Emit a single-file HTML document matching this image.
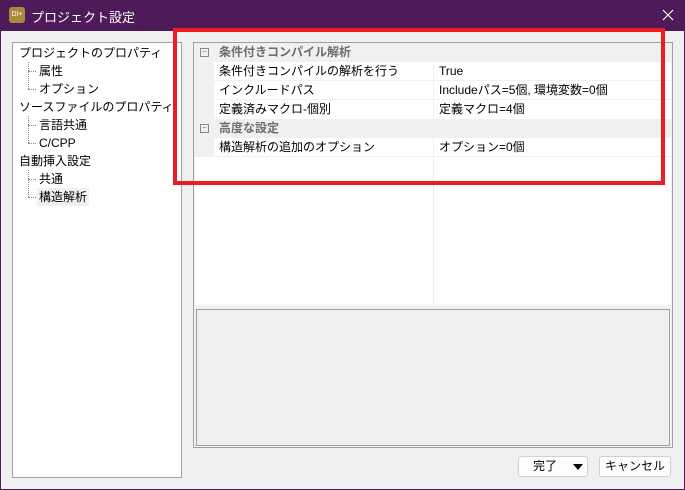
<!DOCTYPE html>
<html><head><meta charset="utf-8"><style>
*{margin:0;padding:0;box-sizing:border-box}
body{width:685px;height:490px;overflow:hidden;background:#f0f0f0;font-family:"Liberation Sans","Noto Sans CJK JP",sans-serif;font-size:12px;color:#000;position:relative}
.abs{position:absolute}
#win{left:0;top:0;width:685px;height:490px;border:1px solid #4f1a5a;border-top:none}
#title{left:0;top:0;width:685px;height:31px;background:#4f1a5a;color:#fff}
#tree{left:12px;top:42px;width:170px;height:436px;background:#fff;border:1px solid #a0a0a0}
.t{position:absolute;left:6px;white-space:nowrap;line-height:18px}
.d{position:absolute;border-left:1px dotted #888;left:15px;width:1px}
.h{position:absolute;border-top:1px dotted #888;left:15px;width:8px;height:1px}
#grid{left:193px;top:42px;width:480px;height:406px;border:1px solid #a0a0a0;background:#f0f0f0}
.row{position:absolute;left:1px;width:476px;height:19px;line-height:19px}
.cat{background:#f0f0f0;color:#6d6d6d;font-weight:bold}
.prop{background:#fff}
.k{position:absolute;left:24px}
.v{position:absolute;left:244px}
.btn{position:absolute;height:21px;border:1px solid #d0d0d0;border-radius:3px;background:#fdfdfd;line-height:19px;text-align:center}
.g{position:absolute;left:0;width:19px;height:19px;background:#f0f0f0}
</style></head><body>
<div id="win" class="abs"></div>
<div id="title" class="abs">
 <div class="abs" style="left:9px;top:7px;width:16px;height:16px;background:#a88a3a;border-radius:3px;color:#fff;font-size:7px;line-height:16px;text-align:center">DI+</div>
 <div class="abs" style="left:31px;top:7px;font-size:13px">プロジェクト設定</div>
 <svg class="abs" style="left:662px;top:9px" width="12" height="12"><path d="M1 1L11 11M11 1L1 11" stroke="#fff" stroke-width="1.2"/></svg>
</div>
<div id="tree" class="abs">
 <div class="t" style="top:1px">プロジェクトのプロパティ</div>
 <div class="d" style="top:19px;height:27px"></div>
 <div class="h" style="top:28px"></div><div class="h" style="top:46px"></div>
 <div class="t" style="left:26px;top:19px">属性</div>
 <div class="t" style="left:26px;top:37px">オプション</div>
 <div class="t" style="top:55px">ソースファイルのプロパティ</div>
 <div class="d" style="top:73px;height:27px"></div>
 <div class="h" style="top:82px"></div><div class="h" style="top:100px"></div>
 <div class="t" style="left:26px;top:73px">言語共通</div>
 <div class="t" style="left:26px;top:91px">C/CPP</div>
 <div class="t" style="top:109px">自動挿入設定</div>
 <div class="d" style="top:127px;height:27px"></div>
 <div class="h" style="top:136px"></div><div class="h" style="top:154px"></div>
 <div class="t" style="left:26px;top:127px">共通</div>
 <div class="t" style="left:24px;top:145px;background:#f0f0f0;padding:0 2px">構造解析</div>
</div>
<div id="grid" class="abs">
 <div class="abs" style="left:1px;top:1px;width:476px;height:261px;background:#fff"></div>
 <div class="abs" style="left:239px;top:115px;width:1px;height:147px;background:#eee"></div>
 <div class="row cat" style="top:0"><span class="abs" style="left:5px;top:5px;width:9px;height:9px;border:1px solid #888;font-size:8px;line-height:6px;text-align:center;font-weight:normal">−</span><span class="k">条件付きコンパイル解析</span></div>
 <div class="row prop" style="top:19px;border-bottom:1px solid #f0f0f0"><div class="g"></div><span class="k">条件付きコンパイルの解析を行う</span><span class="v">True</span></div>
 <div class="row prop" style="top:38px;border-bottom:1px solid #f0f0f0"><div class="g"></div><span class="k">インクルードパス</span><span class="v">Includeパス=5個, 環境変数=0個</span></div>
 <div class="row prop" style="top:57px"><div class="g"></div><span class="k">定義済みマクロ-個別</span><span class="v">定義マクロ=4個</span></div>
 <div class="row cat" style="top:76px"><span class="abs" style="left:5px;top:5px;width:9px;height:9px;border:1px solid #888;font-size:8px;line-height:6px;text-align:center;font-weight:normal">−</span><span class="k">高度な設定</span></div>
 <div class="row prop" style="top:95px;border-bottom:1px solid #f0f0f0"><div class="g"></div><span class="k">構造解析の追加のオプション</span><span class="v">オプション=0個</span></div>
 <div class="abs" style="left:239px;top:19px;width:1px;height:57px;background:#f0f0f0"></div>
 <div class="abs" style="left:239px;top:95px;width:1px;height:20px;background:#f0f0f0"></div>
 <div class="abs" style="left:2px;top:266px;width:474px;height:137px;border:1px solid #a0a0a0;background:#efefef"></div>
</div>
<div class="abs" style="left:173px;top:28px;width:492px;height:157px;border:4px solid #ec1c24"></div>
<div class="btn" style="left:518px;top:456px;width:70px;text-align:left;padding-left:14px">完了<svg class="abs" style="left:54px;top:7px" width="10" height="6"><path d="M0 0H10L5 6Z" fill="#000"/></svg></div>
<div class="btn" style="left:599px;top:456px;width:72px">キャンセル</div>
</body></html>
